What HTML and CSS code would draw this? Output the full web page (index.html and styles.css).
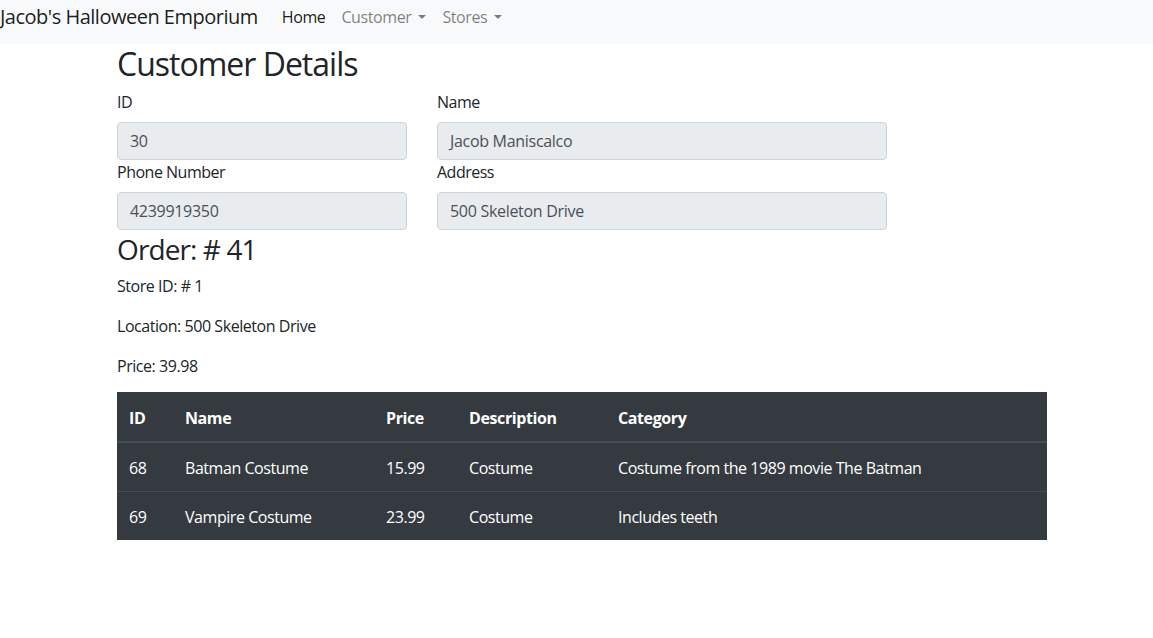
FILE: index.html
```html
<!DOCTYPE html>
<html lang="en">
<head>
<meta charset="utf-8">
<title>Customer Details</title>
<link rel="stylesheet" href="styles.css">
</head>
<body>
<nav class="navbar">
  <a class="brand" href="#">Jacob's Halloween Emporium</a>
  <ul class="nav">
    <li><a class="nav-link active" href="#">Home</a></li>
    <li><a class="nav-link dropdown" href="#">Customer</a></li>
    <li><a class="nav-link dropdown" href="#">Stores</a></li>
  </ul>
</nav>
<main class="container">
  <h2 class="title">Customer Details</h2>
  <div class="form-grid">
    <div class="field">
      <label>ID</label>
      <div class="input">30</div>
    </div>
    <div class="field">
      <label>Name</label>
      <div class="input">Jacob Maniscalco</div>
    </div>
    <div class="field">
      <label>Phone Number</label>
      <div class="input">4239919350</div>
    </div>
    <div class="field">
      <label>Address</label>
      <div class="input">500 Skeleton Drive</div>
    </div>
  </div>
  <h3 class="order-title">Order: # 41</h3>
  <p>Store ID: # 1</p>
  <p>Location: 500 Skeleton Drive</p>
  <p class="last">Price: 39.98</p>
  <table class="table">
    <thead>
      <tr>
        <th class="c-id">ID</th>
        <th class="c-name">Name</th>
        <th class="c-price">Price</th>
        <th class="c-desc">Description</th>
        <th>Category</th>
      </tr>
    </thead>
    <tbody>
      <tr>
        <td>68</td>
        <td>Batman Costume</td>
        <td>15.99</td>
        <td>Costume</td>
        <td>Costume from the 1989 movie The Batman</td>
      </tr>
      <tr>
        <td>69</td>
        <td>Vampire Costume</td>
        <td>23.99</td>
        <td>Costume</td>
        <td>Includes teeth</td>
      </tr>
    </tbody>
  </table>
</main>
</body>
</html>
```
FILE: styles.css
```css
* { box-sizing: border-box; }
body {
  margin: 0;
  font-family: "Open Sans", "Noto Sans", sans-serif;
  font-size: 16px;
  line-height: 1.5;
  color: #212529;
  background: #fff;
}
a { text-decoration: none; }

.navbar {
  display: flex;
  align-items: flex-start;
  height: 44px;
  background: #f8f9fa;
  padding: 2px 0 0;
}
.brand {
  font-size: 20px;
  line-height: 30px;
  color: rgba(0,0,0,.9);
  margin-right: 16px;
  white-space: nowrap;
  letter-spacing: -0.5px;
}
.nav {
  display: flex;
  list-style: none;
  margin: 0;
  padding: 0;
}
.nav-link {
  display: block;
  padding: 3px 8px;
  color: rgba(0,0,0,.5);
  letter-spacing: -0.4px;
}
.nav-link.active { color: rgba(0,0,0,.9); }
.nav-link.dropdown::after {
  content: "";
  display: inline-block;
  margin-left: 7px;
  vertical-align: .255em;
  border-top: .3em solid;
  border-right: .3em solid transparent;
  border-left: .3em solid transparent;
}

.container {
  width: 930px;
  margin-left: 117px;
}
.title {
  font-size: 32px;
  font-weight: 400;
  line-height: 38px;
  margin: 1px 0 7px;
  letter-spacing: -1px;
}
.form-grid {
  display: grid;
  grid-template-columns: 290px 450px;
  column-gap: 30px;
}
.field label {
  display: block;
  margin-bottom: 8px;
  line-height: 24px;
  letter-spacing: -0.5px;
}
.input {
  height: 38px;
  padding: 6px 12px;
  background: #e9ecef;
  border: 1px solid #ced4da;
  border-radius: 4px;
  color: #495057;
  line-height: 24px;
  letter-spacing: -0.3px;
}
.order-title {
  font-size: 28px;
  font-weight: 400;
  line-height: 34px;
  margin: 2px 0 8px;
  letter-spacing: -0.9px;
}
p {
  margin: 0 0 16px;
  letter-spacing: -0.45px;
}
p.last { margin-bottom: 14px; }

.table {
  width: 100%;
  border-collapse: collapse;
  background: #343a40;
  color: #fff;
}
.table th, .table td {
  padding: 13px 12px 11px;
  text-align: left;
  line-height: 24px;
  border-top: 1px solid #454d55;
  letter-spacing: -0.45px;
}
.table thead th {
  padding: 14px 12px 11px;
  border-top: 0;
  border-bottom: 2px solid #454d55;
  font-weight: 700;
  letter-spacing: -0.4px;
}
.c-id { width: 56px; }
.c-name { width: 201px; }
.c-price { width: 83px; }
.c-desc { width: 149px; }
```
